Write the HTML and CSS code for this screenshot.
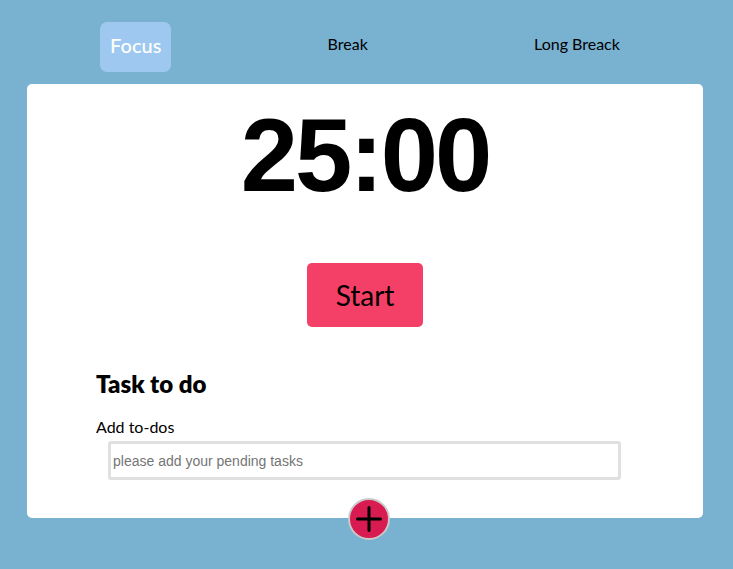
FILE: index.html
```html
<!DOCTYPE html>
<html lang="en">
<head>
<meta charset="utf-8">
<title>Pomodoro</title>
<link rel="stylesheet" href="styles.css">
</head>
<body>
<div class="app">
  <nav class="modes">
    <button class="mode active">Focus</button>
    <button class="mode">Break</button>
    <button class="mode">Long Breack</button>
  </nav>
  <main class="card">
    <div class="timer">25:00</div>
    <div class="actions"><button class="start">Start</button></div>
    <section class="tasks">
      <h2 class="tasks-title">Task to do</h2>
      <label class="tasks-label" for="todo">Add to-dos</label>
      <input class="tasks-input" id="todo" type="text" placeholder="please add your pending tasks">
    </section>
    <button class="add" aria-label="Add task">
      <svg width="26" height="26" viewBox="0 0 26 26"><path d="M13 1.5V24.5M1.5 13H24.5" stroke="#000" stroke-width="3" stroke-linecap="round"/></svg>
    </button>
  </main>
</div>
</body>
</html>
```

FILE: styles.css
```css
* { box-sizing: border-box; }
html, body { margin: 0; height: 100%; }
body {
  background: #79b1d1;
  font-family: Lato, "Open Sans", sans-serif;
  color: #000;
}
.app {
  width: 676px;
  margin-left: 27px;
  padding-top: 22px;
}
.modes {
  display: flex;
  justify-content: space-around;
  align-items: center;
  height: 50px;
  margin-bottom: 12px;
}
.mode {
  font-family: inherit;
  background: none;
  border: 0;
  font-size: 16px;
  color: #000;
  padding: 0 10px 8px;
  height: 50px;
  border-radius: 7px;
  cursor: pointer;
}
.mode.active {
  background: #9ec8ef;
  color: #fff;
  font-size: 20px;
  font-weight: 500;
  padding-bottom: 5px;
}
.card {
  position: relative;
  background: #fff;
  border-radius: 5px;
  height: 434px;
  padding-top: 20px;
}
.timer {
  text-align: center;
  font-family: "Liberation Sans", Arial, sans-serif;
  font-weight: 700;
  font-size: 103px;
  line-height: 103px;
  letter-spacing: -3px;
}
.actions {
  display: flex;
  justify-content: center;
  margin-top: 56px;
}
.start {
  width: 116px;
  height: 64px;
  background: #f43f66;
  border: 0;
  border-radius: 5px;
  font-family: inherit;
  font-size: 28px;
  color: #000;
}
.tasks {
  padding: 42px 0 0 69px;
}
.tasks-title {
  margin: 0;
  font-size: 24px;
  line-height: 30px;
  font-weight: 800;
}
.tasks-label {
  display: block;
  font-size: 16px;
  line-height: 20px;
  margin-top: 18px;
}
.tasks-input {
  display: block;
  margin: 4px 0 0 12px;
  width: 513px;
  height: 39px;
  border: 3px solid #e0e0e0;
  border-radius: 3px;
  padding: 0 2px;
  font-family: "Liberation Sans", Arial, sans-serif;
  font-size: 14px;
}
.tasks-input::placeholder { color: #757575; }
.add {
  position: absolute;
  left: 321px;
  bottom: -22px;
  width: 42px;
  height: 42px;
  border-radius: 50%;
  background: #d81b50;
  border: 2px solid #c9c9c9;
  padding: 0;
  display: flex;
  align-items: center;
  justify-content: center;
}
```
